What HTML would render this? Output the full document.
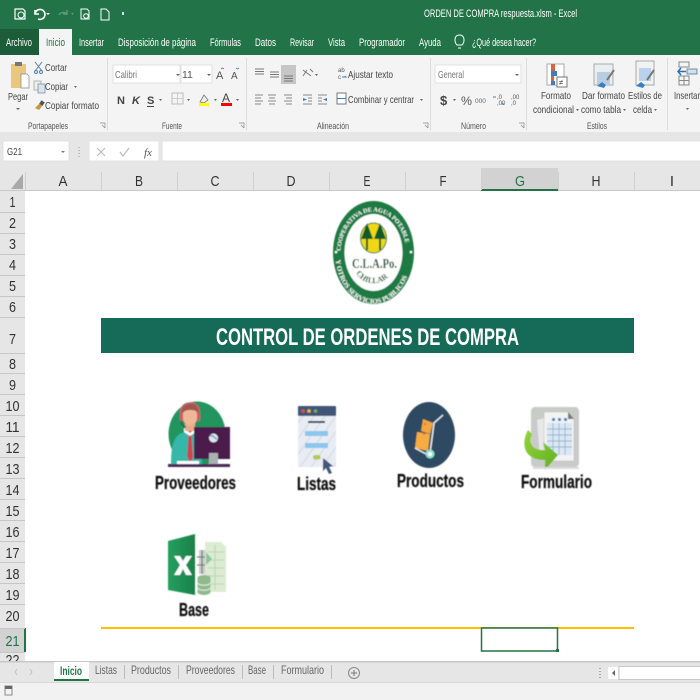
<!DOCTYPE html>
<html lang="es"><head><meta charset="utf-8"><title>ORDEN DE COMPRA respuesta.xlsm - Excel</title>
<style>
html,body{margin:0;padding:0;background:#fff;width:700px;height:700px;overflow:hidden}
svg{display:block;position:absolute;left:0;top:0}
text{font-family:"Liberation Sans",sans-serif}
.w{fill:#fff;font-size:11px}
.g{fill:#444;font-size:10.5px}
.s{fill:#555;font-size:9.5px}
.h{fill:#333;font-size:15px;text-anchor:middle}
.b{fill:#111;font-weight:bold;font-size:18px;stroke:#111;stroke-width:.25px}
.t{fill:#666;font-size:12px}
.i{fill:none;stroke:#666;stroke-width:1}
</style></head><body>
<svg width="700" height="700" viewBox="0 0 700 700" xmlns="http://www.w3.org/2000/svg">
<defs>
<filter id="bl" x="-2%" y="-2%" width="104%" height="104%"><feGaussianBlur stdDeviation="0.35"/></filter>
<filter id="bl2" x="-5%" y="-5%" width="110%" height="110%"><feGaussianBlur stdDeviation="0.45"/></filter>
<path id="arcT" d="M340.500 254 A33 42.500 0 0 1 406.500 254"/>
<path id="arcB" d="M335.500 254 A38 49.500 0 0 0 411.500 254"/>
<path id="arcC" d="M355 270 A19 17 0 0 0 392 270"/>
<pattern id="st" width="9" height="9" patternUnits="userSpaceOnUse" patternTransform="rotate(35)"><rect width="9" height="9" fill="#e9edf3"/><rect width="1.500" height="9" fill="#d9dee6"/></pattern>
<linearGradient id="ar" x1="0" y1="0" x2="1" y2="1"><stop offset="0" stop-color="#93d437"/><stop offset="1" stop-color="#5fb021"/></linearGradient>
<linearGradient id="xl" x1="0" y1="0" x2="1" y2="0"><stop offset="0" stop-color="#23a05f"/><stop offset="1" stop-color="#1b8049"/></linearGradient>
</defs>
<rect width="700" height="700" fill="#fff"/>
<g filter="url(#bl)">
<!-- title bar -->
<rect width="700" height="55" fill="#217346"/>
<rect x="0" y="29" width="39" height="26" fill="#1a5c38"/>
<rect x="39" y="29" width="33" height="27" fill="#f4f4f4"/>
<path d="M15 9h8l2 2v8H15z" fill="none" stroke="#fff" stroke-width="1.200"/><circle cx="21" cy="15" r="3" fill="none" stroke="#fff"/>
<path d="M35 14a5 5 0 1 1 3 5M35 10v4h4" fill="none" stroke="#fff" stroke-width="1.600"/>
<path d="M46 13l4 0-2 2z" fill="#fff"/>
<path d="M67 14a5 5 0 0 0-8 1M67 10v4h-4" fill="none" stroke="#5f9a7c" stroke-width="1.400"/>
<path d="M71 13l3 0-1.500 2z" fill="#5f9a7c"/>
<path d="M81 9h6l2 2v8h-8z" fill="none" stroke="#fff"/><circle cx="86" cy="16" r="2.300" fill="none" stroke="#fff"/>
<path d="M101 9h5l3 3v8h-8z" fill="none" stroke="#fff"/>
<rect x="122" y="12" width="2" height="3" fill="#cde"/>
<text class="w" x="424" y="17" textLength="153" lengthAdjust="spacingAndGlyphs">ORDEN DE COMPRA respuesta.xlsm  -  Excel</text>
<text class="w" x="6" y="46" textLength="26" lengthAdjust="spacingAndGlyphs">Archivo</text>
<text x="46" y="46" textLength="19" lengthAdjust="spacingAndGlyphs" font-size="11" fill="#217346">Inicio</text>
<text class="w" x="79" y="46" textLength="25" lengthAdjust="spacingAndGlyphs">Insertar</text>
<text class="w" x="118" y="46" textLength="78" lengthAdjust="spacingAndGlyphs">Disposición de página</text>
<text class="w" x="210" y="46" textLength="31" lengthAdjust="spacingAndGlyphs">Fórmulas</text>
<text class="w" x="255" y="46" textLength="21" lengthAdjust="spacingAndGlyphs">Datos</text>
<text class="w" x="290" y="46" textLength="24" lengthAdjust="spacingAndGlyphs">Revisar</text>
<text class="w" x="328" y="46" textLength="17" lengthAdjust="spacingAndGlyphs">Vista</text>
<text class="w" x="359" y="46" textLength="46" lengthAdjust="spacingAndGlyphs">Programador</text>
<text class="w" x="419" y="46" textLength="22" lengthAdjust="spacingAndGlyphs">Ayuda</text>
<path d="M458 48h3M457 45c-3-3-3-10 2.500-10s5.500 7 2.500 10z" fill="none" stroke="#fff"/>
<text class="w" x="472" y="46" textLength="64" lengthAdjust="spacingAndGlyphs">¿Qué desea hacer?</text>

<!-- ribbon -->
<rect y="55" width="700" height="77" fill="#f4f4f4"/>
<rect y="132" width="700" height="59" fill="#e6e6e6"/>
<g fill="#dcdcdc"><rect x="107" y="58" width="1" height="72"/><rect x="246" y="58" width="1" height="72"/><rect x="430" y="58" width="1" height="72"/><rect x="526" y="58" width="1" height="72"/><rect x="667" y="58" width="1" height="72"/></g>
<!-- clipboard -->
<rect x="11" y="64" width="15" height="24" fill="#eac77f"/><rect x="15" y="62" width="7" height="4" fill="#777"/>
<path d="M21 74h6l2 2v12h-8z" fill="#fff" stroke="#888" stroke-width=".7"/>
<text class="g" x="8" y="100" textLength="20" lengthAdjust="spacingAndGlyphs">Pegar</text>
<path d="M16 108h4l-2 2z" fill="#666"/>
<path d="M35 62l7 9M42 62l-7 9" stroke="#5a7da3" fill="none"/><circle cx="36" cy="72" r="1.500" fill="none" stroke="#4e7fb8"/><circle cx="41" cy="72" r="1.500" fill="none" stroke="#4e7fb8"/>
<text class="g" x="45" y="71" textLength="22" lengthAdjust="spacingAndGlyphs">Cortar</text>
<rect x="34" y="81" width="7" height="9" fill="#eee" stroke="#999" stroke-width=".7"/><rect x="38" y="84" width="7" height="9" fill="#d7e3ef" stroke="#789" stroke-width=".7"/>
<text class="g" x="45" y="90" textLength="23" lengthAdjust="spacingAndGlyphs">Copiar</text><path d="M74 86h3l-1.500 2z" fill="#666"/>
<path d="M35 108l5-5 3 2-4 5z" fill="#c8963a"/><rect x="40" y="101" width="4" height="4" fill="#555" transform="rotate(35 42 103)"/>
<text class="g" x="45" y="109" textLength="54" lengthAdjust="spacingAndGlyphs">Copiar formato</text>
<text class="s" x="28" y="129" textLength="40" lengthAdjust="spacingAndGlyphs">Portapapeles</text>
<path d="M100 123h5v5M102 125l3 3" fill="none" stroke="#888" stroke-width=".7"/>
<!-- font -->
<rect x="113" y="65" width="67" height="18" fill="#fff" stroke="#e0e0e0"/><rect x="181" y="65" width="31" height="18" fill="#fff" stroke="#e0e0e0"/>
<text x="115" y="78" font-size="10.500" fill="#777" textLength="22" lengthAdjust="spacingAndGlyphs">Calibri</text>
<text x="182" y="78" font-size="10.500" fill="#555">11</text>
<path d="M176 74h4l-2 2zM207 74h4l-2 2z" fill="#666"/>
<text x="216" y="79" font-size="11" fill="#555">A</text><text x="231" y="79" font-size="10" fill="#555">A</text>
<path d="M221 69l1.500-1 1.500 1M236 68l1.500 1 1.500-1" stroke="#4e7fb8" fill="none" stroke-width=".8"/>
<text x="117" y="104" font-size="11" font-weight="bold" fill="#444">N</text>
<text x="132" y="104" font-size="11" font-weight="bold" font-style="italic" fill="#444">K</text>
<text x="147" y="104" font-size="11" font-weight="bold" fill="#444">S</text><rect x="147" y="106" width="7" height="1" fill="#444"/>
<path d="M159 99h3l-1.500 2zM187 99h3l-1.500 2zM214 99h3l-1.500 2zM236 99h3l-1.500 2z" fill="#666"/>
<rect x="172" y="93" width="11" height="11" fill="none" stroke="#bbb"/><path d="M177.500 93v11M172 98.500h11" stroke="#ccc" fill="none"/>
<path d="M200 102l4-7 4 5-4 3z" fill="#eee" stroke="#777" stroke-width=".8"/><rect x="199" y="103" width="10" height="3" fill="#ff0"/>
<text x="222" y="102" font-size="12" fill="#444">A</text><rect x="221" y="103" width="11" height="3" fill="#f00"/>
<text class="s" x="162" y="129" textLength="20" lengthAdjust="spacingAndGlyphs">Fuente</text>
<path d="M239 123h5v5M241 125l3 3" fill="none" stroke="#888" stroke-width=".7"/>
<!-- alignment -->
<path d="M255 69h9M255 71.500h9M255 74h9M270 72h9M270 74.500h9M270 77h9" stroke="#777" fill="none"/>
<rect x="281" y="65" width="15" height="19" fill="#c6c6c6"/><path d="M284 76h9M284 78.500h9M284 81h9" stroke="#777" fill="none"/>
<path d="M303 70l8 6M303 76l4-6M310 69l3 3" stroke="#777" fill="none"/><path d="M315 74h3l-1.500 2z" fill="#666"/>
<path d="M255 96h8M255 99h6M255 102h8M255 105h6M268 96h8M269 99h6M268 102h8M269 105h6M284 96h8M286 99h6M284 102h8M286 105h6" stroke="#888" fill="none" transform="translate(0 -1)"/>
<path d="M303 96h9M303 105h9M308 99h4M308 102h4M318 96h9M318 105h9M318 99h4M318 102h4" stroke="#888" fill="none" transform="translate(0 -1)"/>
<path d="M303 99l4 1.500-4 1.500zM327 99l-4 1.500 4 1.500z" fill="#3a7fc1" transform="translate(0 -1)"/>
<text x="338" y="72" font-size="6" fill="#555">ab</text><text x="338" y="79" font-size="6" fill="#555">c</text><path d="M342 77h4l-1-1" stroke="#3a7fc1" fill="none"/>
<text class="g" x="348" y="78" textLength="45" lengthAdjust="spacingAndGlyphs">Ajustar texto</text>
<rect x="337" y="93" width="9" height="11" fill="#fff" stroke="#777"/><path d="M337 98.500h9M339 98.500h5" stroke="#3a7fc1" fill="none"/>
<text class="g" x="348" y="103" textLength="66" lengthAdjust="spacingAndGlyphs">Combinar y centrar</text><path d="M420 99h3l-1.500 2z" fill="#666"/>
<text class="s" x="317" y="129" textLength="32" lengthAdjust="spacingAndGlyphs">Alineación</text>
<path d="M423 123h5v5M425 125l3 3" fill="none" stroke="#888" stroke-width=".7"/>
<!-- number -->
<rect x="435" y="65" width="86" height="18" fill="#fff" stroke="#e0e0e0"/>
<text x="438" y="78" font-size="10.500" fill="#777" textLength="26" lengthAdjust="spacingAndGlyphs">General</text><path d="M515 74h4l-2 2z" fill="#666"/>
<text x="440" y="105" font-size="13" fill="#444" font-weight="bold">$</text><path d="M453 99h3l-1.500 2z" fill="#666"/>
<text x="461" y="105" font-size="12" fill="#555" textLength="11" lengthAdjust="spacingAndGlyphs">%</text><text x="475" y="103" font-size="6.500" fill="#666">000</text>
<text x="497" y="99" font-size="6" fill="#555">,0</text><text x="497" y="105" font-size="6" fill="#555">,00</text><path d="M496 97h-3M504 104h-3" stroke="#3a7fc1"/>
<text x="511" y="99" font-size="6" fill="#555">,00</text><text x="511" y="105" font-size="6" fill="#555">,0</text>
<text class="s" x="461" y="129" textLength="25" lengthAdjust="spacingAndGlyphs">Número</text>
<path d="M519 123h5v5M521 125l3 3" fill="none" stroke="#888" stroke-width=".7"/>
<!-- styles -->
<rect x="547" y="64" width="17" height="21" fill="#fff" stroke="#aaa"/><rect x="551" y="64" width="4" height="7" fill="#d9643a"/><rect x="551" y="71" width="6" height="5" fill="#3a7fc1"/><rect x="551" y="76" width="3" height="5" fill="#d9643a"/><rect x="551" y="81" width="4" height="4" fill="#3a7fc1"/>
<rect x="557" y="77" width="10" height="10" fill="#fff" stroke="#777"/><text x="559" y="85" font-size="8" fill="#444">≠</text>
<rect x="594" y="64" width="19" height="21" fill="#e9eef3" stroke="#aaa"/><rect x="597" y="72" width="13" height="13" fill="#b9cde2"/><path d="M607 80l7-10" stroke="#777" stroke-width="2"/><path d="M597 86l5-4 4 3-2 3z" fill="#3a7fc1"/>
<rect x="636" y="61" width="18" height="24" fill="#f2f2f2" stroke="#aaa"/><rect x="639" y="68" width="12" height="13" fill="#b9d1ea"/><path d="M647 80l7-10" stroke="#777" stroke-width="2"/><path d="M636 86l5-4 4 3-2 3z" fill="#3a7fc1"/>
<text class="g" x="541" y="99" textLength="30" lengthAdjust="spacingAndGlyphs">Formato</text>
<text class="g" x="533" y="113" textLength="41" lengthAdjust="spacingAndGlyphs">condicional</text><path d="M576 109h3l-1.500 2z" fill="#666"/>
<text class="g" x="582" y="99" textLength="43" lengthAdjust="spacingAndGlyphs">Dar formato</text>
<text class="g" x="581" y="113" textLength="40" lengthAdjust="spacingAndGlyphs">como tabla</text><path d="M623 109h3l-1.500 2z" fill="#666"/>
<text class="g" x="628" y="99" textLength="34" lengthAdjust="spacingAndGlyphs">Estilos de</text>
<text class="g" x="633" y="113" textLength="19" lengthAdjust="spacingAndGlyphs">celda</text><path d="M654 109h3l-1.500 2z" fill="#666"/>
<text class="s" x="587" y="129" textLength="20" lengthAdjust="spacingAndGlyphs">Estilos</text>
<rect x="679" y="62" width="10" height="5" fill="none" stroke="#888"/><rect x="679" y="76" width="10" height="9" fill="none" stroke="#888"/><path d="M684 76v9M679 80.500h10" stroke="#888"/>
<rect x="687" y="69" width="10" height="5" fill="#cfe0f0" stroke="#789"/><path d="M686 71.500h-8M681 68l-3 3.500 3 3.500" stroke="#2a6fb5" fill="none" stroke-width="1.500"/>
<text class="g" x="674" y="99" textLength="26" lengthAdjust="spacingAndGlyphs">Insertar</text><path d="M686 108h3l-1.500 2z" fill="#666"/>

<!-- formula bar -->
<rect x="3" y="141" width="66" height="20" fill="#fff" stroke="#e0e0e0"/>
<text x="7" y="155" font-size="10.500" fill="#444" textLength="15" lengthAdjust="spacingAndGlyphs">G21</text><path d="M61 151h4l-2 2z" fill="#777"/>
<path d="M79 147v1M79 150v1M79 153v1M79 156v1" stroke="#999"/>
<rect x="89" y="141" width="70" height="20" fill="#fff" stroke="#e6e6e6"/><rect x="162" y="141" width="540" height="20" fill="#fff" stroke="#e0e0e0"/>
<path d="M97 148l8 8M105 148l-8 8" stroke="#bbb" fill="none" stroke-width="1.200"/>
<path d="M120 152l3 4 6-8" stroke="#bbb" fill="none" stroke-width="1.200"/>
<text x="144" y="156" font-size="11" font-style="italic" fill="#555" style="font-family:'Liberation Serif',serif">fx</text>

<!-- column headers -->
<path d="M11 189L23 174V189z" fill="#a9a9a9"/>
<rect x="0" y="190" width="700" height="1" fill="#c8c8c8"/>
<rect x="481" y="168" width="77" height="22" fill="#d2d2d2"/><rect x="481" y="189" width="77" height="2" fill="#217346"/>
<g fill="#cfcfcf"><rect x="25" y="172" width="1" height="18"/><rect x="101" y="172" width="1" height="18"/><rect x="177" y="172" width="1" height="18"/><rect x="253" y="172" width="1" height="18"/><rect x="329" y="172" width="1" height="18"/><rect x="405" y="172" width="1" height="18"/><rect x="481" y="172" width="1" height="18"/><rect x="558" y="172" width="1" height="18"/><rect x="634" y="172" width="1" height="18"/></g>
<text class="h" x="63" y="186" textLength="9" lengthAdjust="spacingAndGlyphs">A</text><text class="h" x="139" y="186" textLength="8" lengthAdjust="spacingAndGlyphs">B</text><text class="h" x="215" y="186" textLength="9" lengthAdjust="spacingAndGlyphs">C</text><text class="h" x="291" y="186" textLength="9" lengthAdjust="spacingAndGlyphs">D</text><text class="h" x="367" y="186" textLength="7" lengthAdjust="spacingAndGlyphs">E</text><text class="h" x="443" y="186" textLength="7" lengthAdjust="spacingAndGlyphs">F</text><text class="h" x="520" y="186" textLength="10" lengthAdjust="spacingAndGlyphs" style="fill:#217346">G</text><text class="h" x="596" y="186" textLength="9" lengthAdjust="spacingAndGlyphs">H</text><text class="h" x="672" y="186">I</text>

<!-- row headers -->
<rect x="0" y="191" width="25" height="471" fill="#e6e6e6"/>
<rect x="0" y="628" width="25" height="24" fill="#d2d2d2"/><rect x="24" y="628" width="2" height="24" fill="#217346"/>
<g fill="#c6c6c6"><rect y="212" width="25" height="1"/><rect y="233" width="25" height="1"/><rect y="254" width="25" height="1"/><rect y="275" width="25" height="1"/><rect y="296" width="25" height="1"/><rect y="317" width="25" height="1"/><rect y="353" width="25" height="1"/><rect y="373" width="25" height="1"/><rect y="394" width="25" height="1"/><rect y="415" width="25" height="1"/><rect y="436" width="25" height="1"/><rect y="457" width="25" height="1"/><rect y="478" width="25" height="1"/><rect y="499" width="25" height="1"/><rect y="520" width="25" height="1"/><rect y="541" width="25" height="1"/><rect y="562" width="25" height="1"/><rect y="583" width="25" height="1"/><rect y="604" width="25" height="1"/><rect y="628" width="25" height="1"/><rect y="652" width="25" height="1"/></g>
<text class="h" x="12.500" y="207" textLength="6" lengthAdjust="spacingAndGlyphs">1</text><text class="h" x="12.500" y="228" textLength="7" lengthAdjust="spacingAndGlyphs">2</text><text class="h" x="12.500" y="249" textLength="7" lengthAdjust="spacingAndGlyphs">3</text><text class="h" x="12.500" y="270" textLength="7" lengthAdjust="spacingAndGlyphs">4</text><text class="h" x="12.500" y="291" textLength="7" lengthAdjust="spacingAndGlyphs">5</text><text class="h" x="12.500" y="312" textLength="7" lengthAdjust="spacingAndGlyphs">6</text><text class="h" x="12.500" y="344" textLength="7" lengthAdjust="spacingAndGlyphs">7</text><text class="h" x="12.500" y="369" textLength="7" lengthAdjust="spacingAndGlyphs">8</text><text class="h" x="12.500" y="390" textLength="7" lengthAdjust="spacingAndGlyphs">9</text>
<text class="h" x="12.500" y="411" textLength="14" lengthAdjust="spacingAndGlyphs">10</text><text class="h" x="12.500" y="432" textLength="14" lengthAdjust="spacingAndGlyphs">11</text><text class="h" x="12.500" y="453" textLength="14" lengthAdjust="spacingAndGlyphs">12</text><text class="h" x="12.500" y="474" textLength="14" lengthAdjust="spacingAndGlyphs">13</text><text class="h" x="12.500" y="495" textLength="14" lengthAdjust="spacingAndGlyphs">14</text><text class="h" x="12.500" y="516" textLength="14" lengthAdjust="spacingAndGlyphs">15</text><text class="h" x="12.500" y="537" textLength="14" lengthAdjust="spacingAndGlyphs">16</text><text class="h" x="12.500" y="558" textLength="14" lengthAdjust="spacingAndGlyphs">17</text><text class="h" x="12.500" y="579" textLength="14" lengthAdjust="spacingAndGlyphs">18</text><text class="h" x="12.500" y="600" textLength="14" lengthAdjust="spacingAndGlyphs">19</text><text class="h" x="12.500" y="621" textLength="14" lengthAdjust="spacingAndGlyphs">20</text><text class="h" x="12.500" y="646" textLength="14" lengthAdjust="spacingAndGlyphs" style="fill:#217346">21</text><text class="h" x="12.500" y="665" textLength="14" lengthAdjust="spacingAndGlyphs">22</text>

<!-- banner -->
<rect x="101" y="318" width="533" height="35" fill="#156b58"/>
<text x="216" y="345" font-size="24" font-weight="bold" fill="#fff" textLength="303" lengthAdjust="spacingAndGlyphs">CONTROL DE ORDENES DE COMPRA</text>

<!-- line + selection -->
<rect x="101" y="627" width="533" height="2" fill="#ffc000"/>
<rect x="481.500" y="628" width="76" height="23" fill="#fff" stroke="#217346" stroke-width="1.500"/>
<rect x="556" y="649" width="3" height="3" fill="#217346"/>

<!-- sheet tabs -->
<rect y="662" width="700" height="20" fill="#e6e6e6"/><rect y="661" width="700" height="1.500" fill="#c8c8c8"/>
<rect y="682" width="700" height="18" fill="#f2f2f2"/><rect y="682" width="700" height="1" fill="#d8d8d8"/>
<path d="M17 669l-2 3 2 3M30 669l2 3-2 3" stroke="#c4c4c4" fill="none"/>
<rect x="54" y="662" width="35" height="19" fill="#fff"/><rect x="54" y="679" width="35" height="2" fill="#217346"/>
<text x="60" y="675" font-size="12" font-weight="bold" fill="#217346" textLength="22" lengthAdjust="spacingAndGlyphs">Inicio</text>
<text class="t" x="95" y="674" textLength="22" lengthAdjust="spacingAndGlyphs">Listas</text>
<text class="t" x="131" y="674" textLength="40" lengthAdjust="spacingAndGlyphs">Productos</text>
<text class="t" x="186" y="674" textLength="49" lengthAdjust="spacingAndGlyphs">Proveedores</text>
<text class="t" x="248" y="674" textLength="18" lengthAdjust="spacingAndGlyphs">Base</text>
<text class="t" x="281" y="674" textLength="43" lengthAdjust="spacingAndGlyphs">Formulario</text>
<g fill="#bbb"><rect x="124" y="665" width="1" height="14"/><rect x="178" y="665" width="1" height="14"/><rect x="242" y="665" width="1" height="14"/><rect x="273" y="665" width="1" height="14"/><rect x="331" y="665" width="1" height="14"/></g>
<circle cx="354" cy="673" r="5.500" fill="none" stroke="#888"/><path d="M351 673h6M354 670v6" stroke="#777"/>
<path d="M600 668v1M600 671v1M600 674v1M600 677v1" stroke="#aaa" stroke-width="2"/>
<rect x="608" y="667" width="10" height="12" fill="#fff"/><path d="M615 670l-3 3 3 3z" fill="#666"/>
<rect x="619" y="666.500" width="85" height="13" fill="#fff" stroke="#c8c8c8"/>
<rect x="5" y="686" width="7" height="9" fill="none" stroke="#888"/><rect x="5" y="686" width="7" height="3" fill="#666"/>
</g>

<!-- images -->
<g filter="url(#bl2)">
<!-- logo -->
<ellipse cx="373.500" cy="252.500" rx="40.500" ry="51.500" fill="#1a7a42"/>
<ellipse cx="373.500" cy="252.500" rx="29" ry="38.500" fill="#fff"/>
<text font-size="6.200" font-weight="bold" fill="#fff" style="font-family:'Liberation Serif',serif"><textPath href="#arcT" startOffset="3">COOPERATIVA DE AGUA POTABLE</textPath></text>
<text font-size="7" font-weight="bold" fill="#fff" style="font-family:'Liberation Serif',serif"><textPath href="#arcB" startOffset="6">Y OTROS SERVICIOS PUBLICOS</textPath></text>
<circle cx="336" cy="252" r="1.300" fill="#fff"/><circle cx="411" cy="252" r="1.300" fill="#fff"/>
<ellipse cx="373.500" cy="238" rx="13" ry="15" fill="#f0d815" stroke="#1a7a42" stroke-width="1"/>
<path d="M367 223l6 16h-12zM380 223l6 16h-12z" fill="#0c5a2a"/><path d="M366 238h2v12h-2zM379 238h2v12h-2z" fill="#0c5a2a"/>
<text x="352" y="268" font-size="14" font-weight="bold" fill="#1d4e33" textLength="45" lengthAdjust="spacingAndGlyphs" style="font-family:'Liberation Serif',serif">C.L.A.Po.</text>
<text font-size="8" font-weight="bold" fill="#1d5e3a" style="font-family:'Liberation Serif',serif"><textPath href="#arcC" startOffset="3">CHILLAR</textPath></text>

<!-- proveedores -->
<ellipse cx="197" cy="434" rx="28.500" ry="32.500" fill="#23955f"/>
<path d="M171 464c0-16 2-28 11-31l9-3 9 5 2 29z" fill="#35b8aa"/>
<path d="M188.500 431h3l1 3-1 2 1.500 22-3 4-3-5 1.500-21-1-2z" fill="#d1424f"/>
<path d="M184 428l6 5 6-5v4l-6 4-6-4z" fill="#fff"/>
<rect x="185" y="422" width="10" height="9" fill="#e9a98a"/>
<ellipse cx="190" cy="416" rx="7.500" ry="9.500" fill="#f1b698"/>
<path d="M182 414c-1-6 3-10 9-10s8 4 7 10c-2-4-4-4-8-4s-6 1-8 4z" fill="#a1564e"/>
<path d="M181 418c-2-12 4-15 9-15s11 3 9 15" fill="none" stroke="#d3566b" stroke-width="1.600"/>
<rect x="180" y="413" width="3" height="8" rx="1" fill="#d3566b"/><rect x="197" y="413" width="3" height="8" rx="1" fill="#d3566b"/>
<path d="M181 421c0 3 1 5 5 6" fill="none" stroke="#333"/>
<rect x="194" y="427" width="36" height="32" fill="#4b1f4c"/>
<circle cx="213.500" cy="438" r="4.500" fill="#dde6ee"/><path d="M210 436c3-2 6 4 7 3" stroke="#2b6b9e" fill="none"/>
<rect x="209" y="453" width="9" height="11" fill="#aab0b4"/>
<rect x="177" y="461" width="22" height="3" fill="#fff"/>
<rect x="168" y="464" width="62" height="3" fill="#4b2a55"/>
<text class="b" x="155" y="489" textLength="81" lengthAdjust="spacingAndGlyphs">Proveedores</text>

<!-- listas -->
<rect x="298" y="406" width="38" height="61" rx="1" fill="url(#st)"/>
<rect x="298" y="406" width="38" height="10" rx="1" fill="#3f5478"/>
<circle cx="303" cy="411" r="1.800" fill="#e0503e"/><circle cx="309" cy="411" r="1.800" fill="#eebc30"/><circle cx="315.500" cy="411" r="1.800" fill="#6cb35c"/>
<rect x="308" y="421" width="17" height="2" fill="#2b3f5e"/>
<rect x="305" y="431" width="23" height="5" fill="#8cc5ee"/><rect x="305" y="443" width="23" height="5" fill="#8cc5ee"/>
<rect x="313" y="455" width="7.500" height="4.500" rx="2" fill="#b1cc4f"/>
<path d="M323 458l10 8-4 1 3 6-3 1-3-6-3 3z" fill="#41567c"/>
<text class="b" x="297" y="490" textLength="39" lengthAdjust="spacingAndGlyphs">Listas</text>

<!-- productos -->
<ellipse cx="429" cy="435" rx="26" ry="33" fill="#2f4a62"/>
<path d="M443 415l-9 8-4 30" stroke="#e8edf0" stroke-width="1.500" fill="none"/>
<path d="M423 419l10 4-3 11-9-3z" fill="#f2a63c"/><path d="M417 432l13 2-2 17-13-3z" fill="#f5ad43"/>
<circle cx="425" cy="424" r="1" fill="#e8584a"/><circle cx="424" cy="434" r="1" fill="#e8584a"/>
<path d="M415 448l13 7" stroke="#e8edf0" stroke-width="1.500"/>
<circle cx="430" cy="454" r="4.500" fill="#8fe2cf"/><circle cx="430" cy="454" r="2" fill="#fff"/>
<text class="b" x="397" y="487" textLength="67" lengthAdjust="spacingAndGlyphs">Productos</text>

<!-- formulario -->
<rect x="531" y="407" width="48" height="60" rx="4" fill="#c9cbc9"/>
<path d="M537 420l18-5 3 40-18 3z" fill="#e8e8e8"/>
<path d="M544 412h24l6 7v42h-30z" fill="#f3f3f3" stroke="#bbb" stroke-width=".5"/>
<path d="M568 412l6 7h-6z" fill="#777"/>
<rect x="547" y="423" width="25" height="32" fill="#dbe7f3"/>
<path d="M547 429h25M547 435h25M547 441h25M547 447h25M553 423v32M559 423v32M565 423v32" stroke="#7fa5c9" stroke-width=".7" fill="none"/>
<rect x="552" y="418" width="3" height="3" fill="#3a85c8"/><rect x="558" y="418" width="3" height="3" fill="#3a85c8"/><rect x="564" y="418" width="3" height="3" fill="#3a85c8"/>
<path d="M528 430C521 443 523 460 545 460L545 470 558 455 543 442 545 450C533 451 528 444 532 434z" fill="url(#ar)"/>
<rect x="533" y="467" width="46" height="2" fill="#dcdcdc"/>
<text class="b" x="521" y="488" textLength="71" lengthAdjust="spacingAndGlyphs">Formulario</text>

<!-- base -->
<rect x="199" y="550" width="10" height="24" fill="#c8ccc8"/><path d="M197 557h12M197 565h12M202 550v24" stroke="#666" stroke-width="1" fill="none"/>
<path d="M205 542h16l5 5v45h-21z" fill="#dcebd3"/>
<path d="M208 552h16M208 560h16M208 568h16M208 576h16M208 584h16M215 545v45" stroke="#b4d0a5" stroke-width=".8" fill="none"/>
<path d="M206 552l6 7-6 6z" fill="#8cc49e"/>
<path d="M168 541l27-7v61l-27-5z" fill="url(#xl)"/>
<path d="M174 556h6l3 5 3-5h6l-6 9 6 10h-6l-3-6-3 6h-6l6-10z" fill="#fff"/>
<ellipse cx="204" cy="578" rx="6.500" ry="3" fill="#8fb98e"/><rect x="197.500" y="578" width="13" height="14" fill="#8fb98e"/><ellipse cx="204" cy="592" rx="6.500" ry="3" fill="#8fb98e"/>
<path d="M197.500 583c2 3 11 3 13 0M197.500 588c2 3 11 3 13 0" stroke="#e8f3e8" fill="none"/>
<text class="b" x="179" y="616" textLength="30" lengthAdjust="spacingAndGlyphs">Base</text>
</g>
</svg>
</body></html>
